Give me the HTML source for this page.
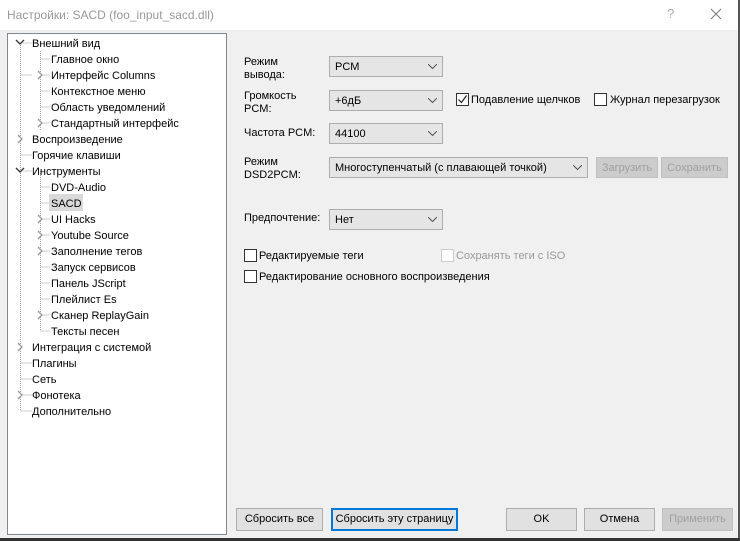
<!DOCTYPE html>
<html><head><meta charset="utf-8"><style>
*{box-sizing:border-box;margin:0;padding:0}
html,body{width:740px;height:541px}
body{background:#f0f0f0;font-family:"Liberation Sans","DejaVu Sans",sans-serif;font-size:11px;color:#000;position:relative;overflow:hidden}
.a{position:absolute;white-space:nowrap}
.title{left:0;top:0;width:740px;height:30px;background:#fff}
.tree{left:7px;top:33px;width:220px;height:502px;background:#fff;border:1px solid #828790}
.combo{position:absolute;background:#e5e5e5;border:1px solid #adadad;height:21px;padding:4px 0 0 5px;white-space:nowrap}
.combo svg{position:absolute;right:5px;top:7px}
.btn{position:absolute;background:#e1e1e1;border:1px solid #adadad;height:23px;text-align:center;line-height:21px;white-space:nowrap}
.dis{color:#a0a0a0;background:#cccccc;border-color:#bfbfbf}
.cb{position:absolute;width:13px;height:13px;border:1px solid #333;background:#fff}
</style></head><body>
<div class="a title"></div>
<div class="a" style="left:7px;top:8px;color:#999;font-size:12px">Настройки: SACD (foo_input_sacd.dll)</div>
<div class="a" style="left:667px;top:6px;color:#aaa;font-size:13px">?</div>
<svg class="a" style="left:710px;top:8px" width="12" height="12"><path d="M1 1L11 11M11 1L1 11" stroke="#777" stroke-width="1"/></svg>
<div class="a" style="left:738px;top:0;width:2px;height:541px;background:#555"></div>
<div class="a" style="left:0;top:538px;width:740px;height:3px;background:#333"></div>
<div class="a tree"></div>
<svg class="a" style="left:8px;top:34px" width="218" height="400">
<g stroke="#a0a0a0" stroke-dasharray="1,1" fill="none">
<path d="M12.5 9V377M12.5 41h11M12.5 121h11M12.5 137h11M12.5 329h11M12.5 345h11M12.5 361h11M12.5 377h11M32.5 17V97M32.5 25h10M32.5 41h10M32.5 57h10M32.5 73h10M32.5 89h10M32.5 137V297M32.5 153h10M32.5 169h10M32.5 185h10M32.5 201h10M32.5 217h10M32.5 233h10M32.5 249h10M32.5 265h10M32.5 281h10M32.5 297h10M12.5 9h11"/>
</g>
<g stroke="#333" fill="none" stroke-width="1.3"><path d="M8 6l4 4 4-4M8 134l4 4 4-4"/></g>
<g stroke="#999" fill="#fff" stroke-width="1.3"><path d="M30 37l4 4-4 4M30 85l4 4-4 4M10 101l4 4-4 4M30 181l4 4-4 4M30 197l4 4-4 4M30 213l4 4-4 4M30 277l4 4-4 4M10 309l4 4-4 4M10 357l4 4-4 4"/></g>
</svg>
<div class="a" style="left:49px;top:194px;width:34px;height:17px;background:#d9d9d9"></div>
<div class="a" style="left:32px;top:36px;line-height:16px">Внешний вид</div>
<div class="a" style="left:51px;top:52px;line-height:16px">Главное окно<br>Интерфейс Columns<br>Контекстное меню<br>Область уведомлений<br>Стандартный интерфейс</div>
<div class="a" style="left:32px;top:132px;line-height:16px">Воспроизведение<br>Горячие клавиши<br>Инструменты</div>
<div class="a" style="left:51px;top:180px;line-height:16px">DVD-Audio<br>SACD<br>UI Hacks<br>Youtube Source<br>Заполнение тегов<br>Запуск сервисов<br>Панель JScript<br>Плейлист Es<br>Сканер ReplayGain<br>Тексты песен</div>
<div class="a" style="left:32px;top:340px;line-height:16px">Интеграция с системой<br>Плагины<br>Сеть<br>Фонотека<br>Дополнительно</div>

<div class="a" style="left:244px;top:56px;line-height:13px">Режим<br>вывода:</div>
<div class="a" style="left:244px;top:90px;line-height:13px">Громкость<br>PCM:</div>
<div class="a" style="left:244px;top:127px">Частота PCM:</div>
<div class="a" style="left:244px;top:156px;line-height:13px">Режим<br>DSD2PCM:</div>
<div class="a" style="left:244px;top:212px">Предпочтение:</div>

<div class="combo" style="left:329px;top:56px;width:114px">PCM<svg width="9" height="6"><path d="M0 0l4.5 4.5L9 0" stroke="#555" fill="none"/></svg></div>
<div class="combo" style="left:329px;top:90px;width:114px">+6дБ<svg width="9" height="6"><path d="M0 0l4.5 4.5L9 0" stroke="#555" fill="none"/></svg></div>
<div class="combo" style="left:329px;top:123px;width:114px">44100<svg width="9" height="6"><path d="M0 0l4.5 4.5L9 0" stroke="#555" fill="none"/></svg></div>
<div class="combo" style="left:329px;top:157px;width:259px">Многоступенчатый (с плавающей точкой)<svg width="9" height="6"><path d="M0 0l4.5 4.5L9 0" stroke="#555" fill="none"/></svg></div>
<div class="combo" style="left:329px;top:209px;width:114px">Нет<svg width="9" height="6"><path d="M0 0l4.5 4.5L9 0" stroke="#555" fill="none"/></svg></div>
<div class="btn dis" style="left:596px;top:157px;width:62px;height:21px;line-height:20px">Загрузить</div>
<div class="btn dis" style="left:661px;top:157px;width:67px;height:21px;line-height:20px">Сохранить</div>

<div class="cb" style="left:456px;top:93px"><svg width="11" height="11" style="position:absolute;left:0;top:0"><path d="M1.5 5.5l3 3 5-7" stroke="#222" fill="none" stroke-width="1.2"/></svg></div>
<div class="a" style="left:471px;top:94px">Подавление щелчков</div>
<div class="cb" style="left:594px;top:93px"></div>
<div class="a" style="left:610px;top:94px">Журнал перезагрузок</div>
<div class="cb" style="left:244px;top:249px"></div>
<div class="a" style="left:259px;top:250px">Редактируемые теги</div>
<div class="cb" style="left:441px;top:249px;border-color:#ccc"></div>
<div class="a" style="left:456px;top:250px;color:#999">Сохранять теги с ISO</div>
<div class="cb" style="left:244px;top:270px"></div>
<div class="a" style="left:259px;top:271px">Редактирование основного воспроизведения</div>

<div class="btn" style="left:236px;top:508px;width:87px">Сбросить все</div>
<div class="btn" style="left:331px;top:508px;width:127px;border:2px solid #0078d7;line-height:19px">Сбросить эту страницу</div>
<div class="btn" style="left:506px;top:508px;width:71px">OK</div>
<div class="btn" style="left:584px;top:508px;width:71px">Отмена</div>
<div class="btn dis" style="left:662px;top:508px;width:71px">Применить</div>
</body></html>
